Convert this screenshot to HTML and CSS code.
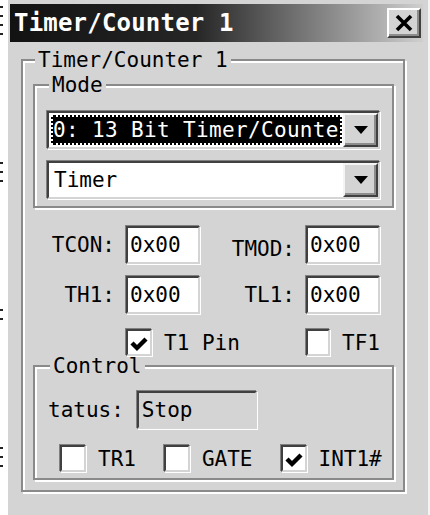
FILE: index.html
```html
<!DOCTYPE html>
<html lang="en">
    <head>
        <meta charset="UTF-8">
        <meta name="viewport" content="width=device-width, initial-scale=1.0">
        <title>Timer/Counter 1</title>
        <link rel="stylesheet" href="styles.css">
    </head>
    <body>
        <div class="screen">
            <div class="edge">
                <span class="tick"></span><span class="tick"></span><span class="tick"></span><span class="tick"></span>
                <span class="tick gap"></span><span class="tick"></span><span class="tick"></span>
                <span class="tick gap"></span><span class="tick"></span>
                <span class="tick gap"></span><span class="tick"></span><span class="tick"></span>
            </div>
            <div class="window">
                <div class="titlebar">
                    <span class="title">Timer/Counter 1</span>
                    <button class="close-btn" type="button">
                        <svg width="20" height="18" viewBox="0 0 20 18">
                            <path d="M3 2 L17 16 M17 2 L3 16" stroke="#000" stroke-width="3.6" fill="none"/>
                        </svg>
                    </button>
                </div>

                <fieldset class="group outer">
                    <legend>Timer/Counter 1</legend>

                    <fieldset class="group mode">
                        <legend>Mode</legend>
                        <div class="combo sunken">
                            <div class="combo-text selected">0: 13 Bit Timer/Counte</div>
                            <div class="combo-btn">
                                <svg width="14" height="8" viewBox="0 0 14 8"><path d="M0 0 H14 L7 8 Z" fill="#000"/></svg>
                            </div>
                        </div>
                        <div class="combo sunken">
                            <div class="combo-text">Timer</div>
                            <div class="combo-btn">
                                <svg width="14" height="8" viewBox="0 0 14 8"><path d="M0 0 H14 L7 8 Z" fill="#000"/></svg>
                            </div>
                        </div>
                    </fieldset>

                    <div class="regs">
                        <label class="reg-label" for="tcon">TCON:</label>
                        <div class="field sunken" id="tcon">0x00</div>
                        <label class="reg-label low" for="tmod">TMOD:</label>
                        <div class="field sunken" id="tmod">0x00</div>

                        <label class="reg-label" for="th1">TH1:</label>
                        <div class="field sunken" id="th1">0x00</div>
                        <label class="reg-label" for="tl1">TL1:</label>
                        <div class="field sunken" id="tl1">0x00</div>
                    </div>

                    <div class="regs flags">
                        <div class="check pin">
                            <span class="box sunken">
                                <svg width="18" height="15" viewBox="0 0 18 15"><path d="M2 6 L7 11 L16 2" stroke="#000" stroke-width="4.4" fill="none"/></svg>
                            </span>
                            <span>T1 Pin</span>
                        </div>
                        <div class="check tf">
                            <span class="box sunken"></span>
                            <span>TF1</span>
                        </div>
                    </div>

                    <fieldset class="group control">
                        <legend>Control</legend>
                        <div class="status-row">
                            <span>tatus:</span>
                            <div class="field sunken readonly">Stop</div>
                        </div>
                        <div class="control-flags">
                            <div class="check">
                                <span class="box sunken"></span>
                                <span>TR1</span>
                            </div>
                            <div class="check">
                                <span class="box sunken"></span>
                                <span>GATE</span>
                            </div>
                            <div class="check">
                                <span class="box sunken">
                                    <svg width="18" height="15" viewBox="0 0 18 15"><path d="M2 6 L7 11 L16 2" stroke="#000" stroke-width="4.4" fill="none"/></svg>
                                </span>
                                <span>INT1#</span>
                            </div>
                        </div>
                    </fieldset>
                </fieldset>
            </div>
        </div>
    </body>
</html>
```

FILE: styles.css
```css
body {
    margin: 0;
    background-color: #fff;
    font-family: "DejaVu Sans Mono", monospace;
    font-size: 21px;
    color: #000;
    overflow: hidden;
}
.screen {
    display: flex;
    height: 515px;
}
.edge {
    width: 8px;
    display: flex;
    flex-direction: column;
    padding-top: 6px;
    gap: 7px;
}
.tick {
    width: 3px;
    height: 2px;
    background-color: #222;
}
.tick.gap {
    margin-top: 120px;
}
.window {
    width: 422px;
    box-sizing: border-box;
    padding: 4px 7px 0 2px;
    background-color: #d4d4d4;
    box-shadow: inset -2px 0 #f4f4f4;
}
.titlebar {
    height: 38px;
    display: flex;
    align-items: center;
    justify-content: space-between;
    padding: 0 2px 0 4px;
    background: linear-gradient(to right, #121212, #262626 45%, #cfcfcf);
}
.title {
    color: #fff;
    font-weight: bold;
    font-size: 24px;
    letter-spacing: 0.2px;
}
.close-btn {
    width: 34px;
    height: 30px;
    box-sizing: border-box;
    padding: 0;
    background-color: #d4d4d4;
    border: 2px solid;
    border-color: #fff #404040 #404040 #fff;
    box-shadow: inset -2px -2px #8c8c8c;
    display: flex;
    align-items: center;
    justify-content: center;
}

/* group boxes */
.group {
    margin: 0;
    min-width: 0;
    border: 2px solid #8a8a8a;
    box-shadow: inset 2px 2px #fff, 2px 2px #fff;
}
legend {
    padding: 0 3px;
    margin-left: 2px;
    line-height: 20px;
    background-color: #d4d4d4;
}
.outer {
    margin: 8px 18px 0 11px;
    padding: 5px 9px 10px 10px;
}
.mode {
    padding: 16px 12px 7px;
}
.control {
    padding: 15px 9px 6px 13px;
}

.sunken {
    border: 2px solid;
    border-color: #404040 #d4d4d4 #d4d4d4 #404040;
    box-shadow: -1px -1px 0 #808080, 1px 1px 0 #fff;
}

/* combo boxes */
.combo {
    display: flex;
    height: 38px;
    box-sizing: border-box;
    background-color: #fff;
}
.combo + .combo {
    margin-top: 12px;
}
.combo-text {
    flex: 1;
    display: flex;
    align-items: center;
    overflow: hidden;
    white-space: nowrap;
    padding-left: 5px;
}
.combo-text.selected {
    margin: 2px 1px 2px 2px;
    padding-left: 2px;
    letter-spacing: 0.35px;
    background-color: #000;
    color: #fff;
    outline: 2px dotted #fff;
    outline-offset: -2px;
}
.combo-btn {
    width: 35px;
    box-sizing: border-box;
    background-color: #d4d4d4;
    border: 2px solid;
    border-color: #f4f4f4 #404040 #404040 #f4f4f4;
    box-shadow: inset -2px -2px #8c8c8c;
    display: flex;
    align-items: center;
    justify-content: center;
}

/* register fields */
.regs {
    display: grid;
    grid-template-columns: 82px 74px 84px 74px;
    column-gap: 11px;
    row-gap: 12px;
    align-items: center;
    margin-top: 18px;
}
.reg-label {
    text-align: right;
}
.reg-label.low {
    padding-top: 8px;
}
.field {
    height: 38px;
    box-sizing: border-box;
    padding-left: 2px;
    display: flex;
    align-items: center;
    background-color: #fff;
}
.field.readonly {
    width: 120px;
    padding-left: 3px;
    background-color: #d4d4d4;
}

/* check boxes */
.flags {
    margin-top: 15px;
}
.check {
    display: flex;
    align-items: center;
    gap: 12px;
}
.check.pin {
    grid-column: 2 / span 2;
}
.check.tf {
    grid-column: 4;
}
.box {
    width: 26px;
    height: 27px;
    box-sizing: border-box;
    padding-top: 4px;
    background-color: #fff;
    display: flex;
    align-items: center;
    justify-content: center;
}

.status-row {
    display: flex;
    align-items: center;
    gap: 13px;
}
.control-flags {
    display: flex;
    gap: 28px;
    margin: 16px 0 0 12px;
}
```
